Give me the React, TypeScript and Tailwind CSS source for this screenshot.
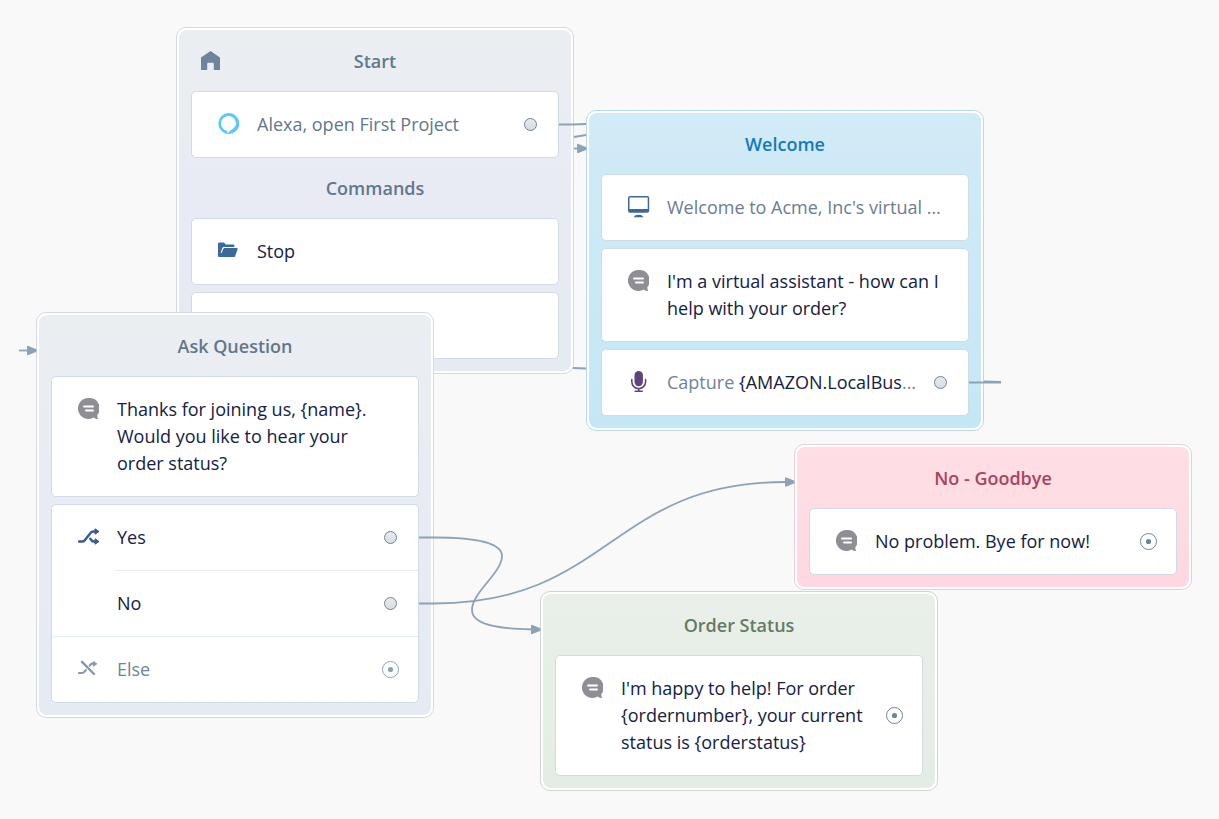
import type { ReactNode } from "react";

type Tone = "slate" | "blue" | "pink" | "green";

const toneBorder: Record<Tone, string> = {
  slate: "border-[#d5d9e2]",
  blue: "border-[#b9d9ea]",
  pink: "border-[#e6d0d6]",
  green: "border-[#cdd6ce]",
};

const toneFill: Record<Tone, string> = {
  slate: "from-[#ebeef1] via-[#e8ebf4] to-[#e6eaf2]",
  blue: "from-[#d1ebf7] via-[#cbe9f6] to-[#c5e7f5]",
  pink: "from-[#fedfe5] via-[#fedce3] to-[#ffd7e0]",
  green: "from-[#e9f0e9] via-[#e7eee6] to-[#e4ede4]",
};

const toneTitle: Record<Tone, string> = {
  slate: "text-[#62778c]",
  blue: "text-[#127abf]",
  pink: "text-[#a8445f]",
  green: "text-[#667a66]",
};

function HomeIcon() {
  return (
    <svg viewBox="0 0 20 20" className="h-5 w-5" aria-hidden="true">
      <path d="M10.500 0 1 6.500V19h6.200v-6c0-.8.5-1.300 1.300-1.300h4c.8 0 1.300.5 1.300 1.300v6H20V6.500Z" fill="#6e849a" />
    </svg>
  );
}

function AlexaIcon() {
  return (
    <svg viewBox="0 0 22 22" className="h-[21px] w-[21px]" aria-hidden="true">
      <path
        d="M11 0a11 11 0 0 0-1.100 21.900v-2.200c0-.5-.3-1-.8-1.200A7.800 7.800 0 1 1 18.800 11c0 3.800-4.200 6-7 8.300-1 .8-1.700 1.600-1.900 2.600A11 11 0 1 0 11 0Z"
        fill="#5dcaf5"
      />
    </svg>
  );
}

function FolderIcon() {
  return (
    <svg viewBox="0 0 20 16" className="mb-0.5 h-4 w-5" aria-hidden="true">
      <path d="M1.300.5h4.700l1.800 2h7.400c.7 0 1.200.5 1.200 1.200V5H6.200c-1 0-1.700.5-2.100 1.400L2.600 11h1L5.300 7c.2-.6.600-.9 1.200-.9h12.400c.6 0 .9.5.7 1.100l-2.400 6.700c-.3.8-.8 1.200-1.600 1.200H1.300C.6 15.100 0 14.600 0 13.800v-12C0 1.100.6.5 1.300.5Z" fill="#3d689a" />
    </svg>
  );
}

function ScreenIcon() {
  return (
    <svg viewBox="0 0 22 22" className="h-[22px] w-[22px]" aria-hidden="true">
      <path
        fillRule="evenodd"
        d="M2 0h17.200A2 2 0 0 1 21.200 2v12.700a2 2 0 0 1-2 2H2a2 2 0 0 1-2-2V2a2 2 0 0 1 2-2Zm-.5 1.500v11.500h18.200v-11.500Z"
        fill="#3d689a"
      />
      <path d="M5.800 21.300c.5-1.700 2.500-2.500 4.800-2.500s4.300.8 4.800 2.500Z" fill="#3d689a" />
    </svg>
  );
}

function SpeakIcon() {
  return (
    <svg viewBox="0 0 21 21" className="h-[21px] w-[21px]" aria-hidden="true">
      <path d="M10.500 0a10.500 10.500 0 1 0 5.200 19.600c1 1 2.700 1.500 4.500 1.500-.7-1-.9-2.600-.8-4A10.500 10.500 0 0 0 10.500 0Z" fill="#8f8e95" />
      <path d="M6 8.600h9M8 12.600h7" stroke="#fff" strokeWidth="2" strokeLinecap="round" />
    </svg>
  );
}

function MicIcon() {
  return (
    <svg viewBox="0 0 21 21" className="h-[21px] w-[21px]" aria-hidden="true">
      <rect x="6.500" y="0" width="8.400" height="15.200" rx="4.200" fill="#5c4679" />
      <path d="M3.800 8.500v2.300a6.900 6.900 0 0 0 13.800 0V8.500M10.700 17.500v2.500M7.200 20.200h7" fill="none" stroke="#5c4679" strokeWidth="1.600" strokeLinecap="round" />
    </svg>
  );
}

function BranchIcon() {
  return (
    <svg viewBox="0 0 22 18" className="h-[18px] w-[22px]" aria-hidden="true">
      <path d="M1 13.500h3.300c1 0 1.700-.4 2.300-1.100l6.300-7.800C13.600 3.800 14.400 3.500 15.400 3.500h2.100M12.300 10.800l1.400 1.700c.5.700 1.200 1 2.100 1h1.700" fill="none" stroke="#3a5999" strokeWidth="2.400" strokeLinecap="round" />
      <path d="m17 .8 4 2.700-4 2.700ZM17 10.800l4 2.700-4 2.700Z" fill="#3a5999" stroke="#3a5999" strokeWidth="1" strokeLinejoin="round" />
    </svg>
  );
}

function ElseIcon() {
  return (
    <svg viewBox="0 0 22 18" className="h-[18px] w-[22px]" aria-hidden="true">
      <path d="M1 13h3c1 0 1.700-.4 2.300-1.100l1.500-1.800M11.800 5.600l.8-1c.5-.600 1-.9 1.800-.9h1" fill="none" stroke="#8698ac" strokeWidth="2.200" strokeLinecap="round" />
      <path d="M4 1.800 16 14" fill="none" stroke="#8698ac" strokeWidth="2.400" strokeLinecap="round" />
      <path d="m15.300 1.200 3.800 2.600-3.800 2.600Z" fill="#8698ac" stroke="#8698ac" strokeWidth=".6" strokeLinejoin="round" />
    </svg>
  );
}

function Port({ label }: { label: string }) {
  return (
    <button type="button" aria-label={label} className="flex w-[19px] shrink-0 items-center justify-center">
      <span className="h-[13px] w-[13px] rounded-full border border-[#6e849a] bg-linear-to-b from-[#e8eaec] to-[#d8dde2]" />
    </button>
  );
}

function EndPort({ label, muted = false }: { label: string; muted?: boolean }) {
  return (
    <button type="button" aria-label={label} className="flex w-[19px] shrink-0 items-center justify-center">
      <svg viewBox="0 0 17 17" className={muted ? "h-[17px] w-[17px] text-[#8da2b5]" : "h-[17px] w-[17px] text-[#6e849a]"} aria-hidden="true">
        <circle cx="8.500" cy="8.500" r="8" fill="none" stroke="currentColor" />
        <circle cx="8.500" cy="8.500" r="2.600" fill="currentColor" />
      </svg>
    </button>
  );
}

function Block({ tone, title, icon, place, children }: { tone: Tone; title: string; icon?: ReactNode; place: string; children: ReactNode }) {
  return (
    <section className={`absolute w-[398px] rounded-[10px] border bg-white p-0.5 ${toneBorder[tone]} ${place}`}>
      <div className={`flex flex-col rounded-lg bg-linear-to-b px-3 pb-3 ${toneFill[tone]}`}>
        <header className="grid h-[61px] grid-cols-[38px_1fr_38px] items-center">
          <span className="flex justify-center">{icon}</span>
          <h2 className={`text-center text-lg font-semibold ${toneTitle[tone]}`}>{title}</h2>
        </header>
        <div className="flex flex-col gap-[7px]">{children}</div>
      </div>
    </section>
  );
}

function Card({ children }: { children: ReactNode }) {
  return <div className="rounded-[5px] border border-[#d2dae6] bg-white">{children}</div>;
}

function Row({ icon, port, children }: { icon?: ReactNode; port?: ReactNode; children: ReactNode }) {
  return (
    <div className="flex min-h-[65px] pr-[18px] text-lg/[27px]">
      <span className="flex h-[63px] w-[65px] shrink-0 items-center pl-[26px]">{icon}</span>
      <div className="min-w-0 flex-1 py-[19px]">{children}</div>
      {port && <div className="flex shrink-0 items-center pl-3">{port}</div>}
    </div>
  );
}

function Links() {
  return (
    <svg className="pointer-events-none absolute inset-0 h-[819px] w-[1219px]" viewBox="0 0 1219 819" aria-hidden="true">
      <g fill="none" stroke="#8da2b5" strokeWidth="1.800">
        <path d="M559 124.500H573L586 124" />
        <path d="M574 137 586 135" />
        <path d="M574 148.500h5" />
        <path d="M573 368 586 368.500" />
        <path d="M19 350.500h10" />
        <path d="M969 382.500h15M984 381.500l17 .5M984 382.500h17" />
        <path d="M419 537.500h15C462 537.500 502 540 502 556C502 573 472 592 472 610C472 627 508 629 532 629.500" />
        <path d="M419 603.500h15C610 603.500 610 482 786 482" />
      </g>
      <g fill="#8da2b5" stroke="#8da2b5" strokeWidth="2" strokeLinejoin="round">
        <path d="m578 144.800 7.500 3.200v1l-7.500 3.200Z" />
        <path d="m28 346.800 7.500 3.200v1l-7.500 3.200Z" />
        <path d="m532 625.800 7.500 3.200v1l-7.500 3.200Z" />
        <path d="m786 478.300 7.500 3.200v1l-7.500 3.200Z" />
      </g>
    </svg>
  );
}

export default function App() {
  return (
    <main className="relative min-h-screen overflow-hidden bg-[#f9f9f9] font-['Open_Sans','Noto_Sans',sans-serif] text-[#132144]">
      <Block tone="slate" title="Start" icon={<HomeIcon />} place="left-[176px] top-[27px]">
        <Card>
          <Row icon={<AlexaIcon />} port={<Port label="Start output" />}>
            <p className="truncate text-[#62778c]">Alexa, open First Project</p>
          </Row>
        </Card>
        <h3 className="flex h-[46px] items-center justify-center text-lg font-semibold text-[#62778c]">Commands</h3>
        <Card>
          <Row icon={<FolderIcon />}>
            <p>Stop</p>
          </Row>
        </Card>
        <Card>
          <Row>{null}</Row>
        </Card>
      </Block>

      <Block tone="slate" title="Ask Question" place="left-[36px] top-[312px]">
        <Card>
          <Row icon={<SpeakIcon />}>
            <p className="pr-4">{"Thanks for joining us, {name}. Would you like to hear your order status?"}</p>
          </Row>
        </Card>
        <Card>
          <Row icon={<BranchIcon />} port={<Port label="Yes output" />}>
            <p>Yes</p>
          </Row>
          <div className="ml-[63px] border-t border-[#e8ecf1]" />
          <Row port={<Port label="No output" />}>
            <p>No</p>
          </Row>
          <div className="border-t border-[#e4ecf3]" />
          <Row icon={<ElseIcon />} port={<EndPort label="Else output" muted />}>
            <p className="text-[#6e849a]">Else</p>
          </Row>
        </Card>
      </Block>

      <Block tone="blue" title="Welcome" place="left-[586px] top-[110px]">
        <Card>
          <Row icon={<ScreenIcon />}>
            <p className="truncate text-[#6c7d90]">Welcome to Acme, Inc's virtual …</p>
          </Row>
        </Card>
        <Card>
          <Row icon={<SpeakIcon />}>
            <p>I'm a virtual assistant - how can I help with your order?</p>
          </Row>
        </Card>
        <Card>
          <Row icon={<MicIcon />} port={<Port label="Capture output" />}>
            <p className="whitespace-nowrap text-[#6e849a]">
              Capture <span className="text-[#132144]">{"{AMAZON.LocalBus"}</span>…
            </p>
          </Row>
        </Card>
      </Block>

      <Block tone="pink" title="No - Goodbye" place="left-[794px] top-[444px]">
        <Card>
          <Row icon={<SpeakIcon />} port={<EndPort label="Goodbye output" />}>
            <p>No problem. Bye for now!</p>
          </Row>
        </Card>
      </Block>

      <Block tone="green" title="Order Status" place="left-[540px] top-[591px]">
        <Card>
          <Row icon={<SpeakIcon />} port={<EndPort label="Order status output" />}>
            <p>{"I'm happy to help! For order {ordernumber}, your current status is {orderstatus}"}</p>
          </Row>
        </Card>
      </Block>

      <Links />
    </main>
  );
}
